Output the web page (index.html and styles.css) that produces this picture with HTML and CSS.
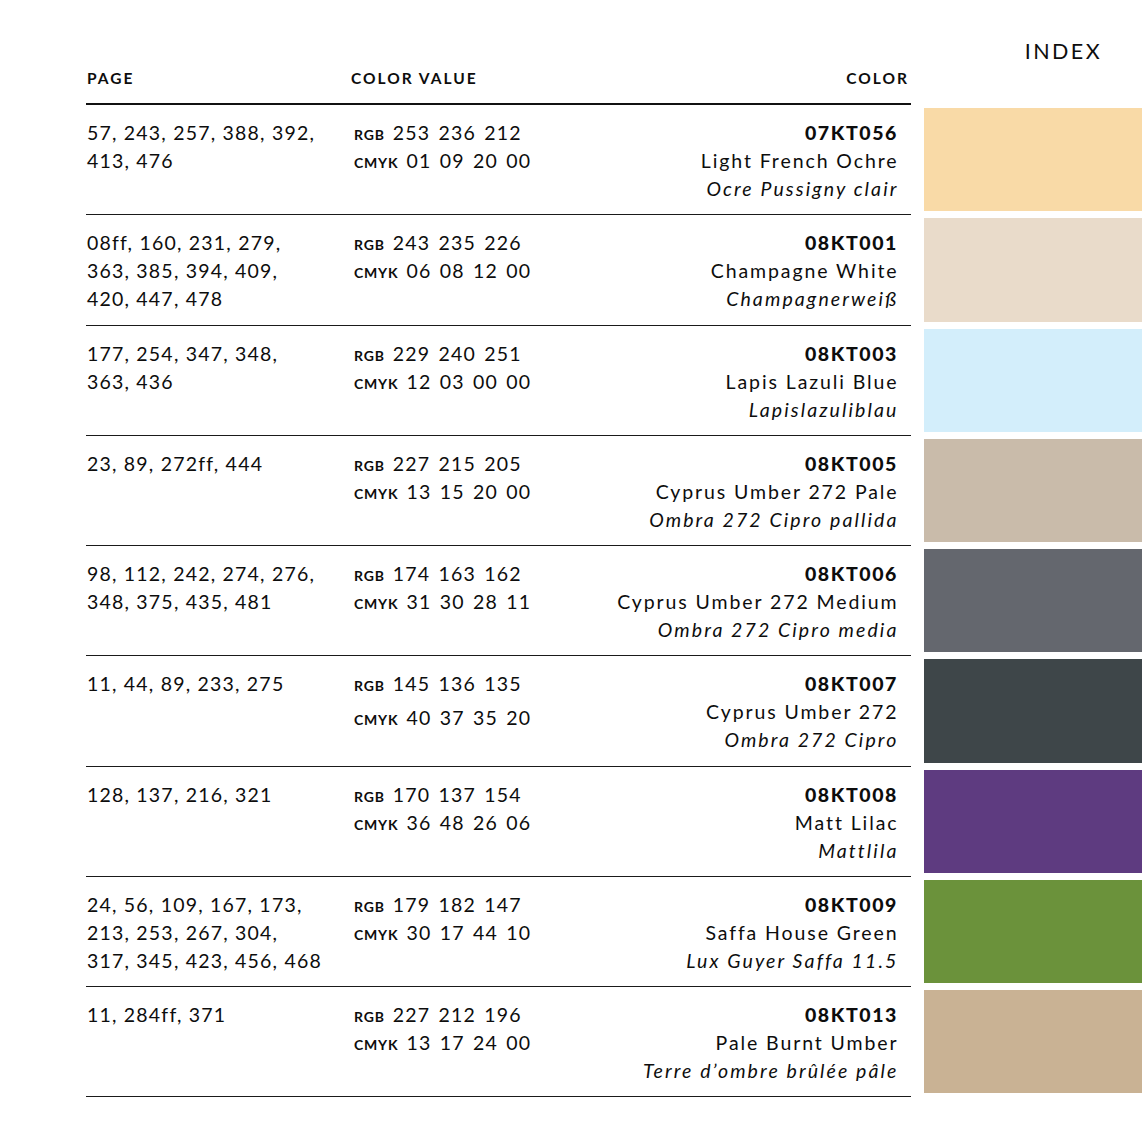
FILE: index.html
```html
<!DOCTYPE html>
<html lang="en">
<head>
<meta charset="utf-8">
<title>Index</title>
<link rel="stylesheet" href="styles.css">
</head>
<body>
<div class="page">
  <div class="row head">
    <div class="cells">
      <div class="c-page label">PAGE</div>
      <div class="c-val label">COLOR VALUE</div>
      <div class="c-color label">COLOR</div>
    </div>
    <div class="index">INDEX</div>
  </div>

  <div class="row">
    <div class="cells">
      <div class="c-page">57, 243, 257, 388, 392,<br>413, 476</div>
      <div class="c-val"><div><span class="sc">RGB</span> 253 236 212</div><div><span class="sc">CMYK</span> 01 09 20 00</div></div>
      <div class="c-color"><b>07KT056</b><span>Light French Ochre</span><i>Ocre Pussigny clair</i></div>
    </div>
    <div class="swatch" style="background:#f9daa7"></div>
  </div>

  <div class="row">
    <div class="cells">
      <div class="c-page">08ff, 160, 231, 279,<br>363, 385, 394, 409,<br>420, 447, 478</div>
      <div class="c-val"><div><span class="sc">RGB</span> 243 235 226</div><div><span class="sc">CMYK</span> 06 08 12 00</div></div>
      <div class="c-color"><b>08KT001</b><span>Champagne White</span><i>Champagnerweiß</i></div>
    </div>
    <div class="swatch" style="background:#e9dbca"></div>
  </div>

  <div class="row">
    <div class="cells">
      <div class="c-page">177, 254, 347, 348,<br>363, 436</div>
      <div class="c-val"><div><span class="sc">RGB</span> 229 240 251</div><div><span class="sc">CMYK</span> 12 03 00 00</div></div>
      <div class="c-color"><b>08KT003</b><span>Lapis Lazuli Blue</span><i>Lapislazuliblau</i></div>
    </div>
    <div class="swatch" style="background:#d3eefb"></div>
  </div>

  <div class="row">
    <div class="cells">
      <div class="c-page">23, 89, 272ff, 444</div>
      <div class="c-val"><div><span class="sc">RGB</span> 227 215 205</div><div><span class="sc">CMYK</span> 13 15 20 00</div></div>
      <div class="c-color"><b>08KT005</b><span>Cyprus Umber 272 Pale</span><i>Ombra 272 Cipro pallida</i></div>
    </div>
    <div class="swatch" style="background:#c9bbaa"></div>
  </div>

  <div class="row">
    <div class="cells">
      <div class="c-page">98, 112, 242, 274, 276,<br>348, 375, 435, 481</div>
      <div class="c-val"><div><span class="sc">RGB</span> 174 163 162</div><div><span class="sc">CMYK</span> 31 30 28 11</div></div>
      <div class="c-color"><b>08KT006</b><span>Cyprus Umber 272 Medium</span><i>Ombra 272 Cipro media</i></div>
    </div>
    <div class="swatch" style="background:#64676e"></div>
  </div>

  <div class="row">
    <div class="cells">
      <div class="c-page">11, 44, 89, 233, 275</div>
      <div class="c-val"><div><span class="sc">RGB</span> 145 136 135</div><div class="shift"><span class="sc">CMYK</span> 40 37 35 20</div></div>
      <div class="c-color"><b>08KT007</b><span>Cyprus Umber 272</span><i>Ombra 272 Cipro</i></div>
    </div>
    <div class="swatch" style="background:#3e4649"></div>
  </div>

  <div class="row">
    <div class="cells">
      <div class="c-page">128, 137, 216, 321</div>
      <div class="c-val"><div><span class="sc">RGB</span> 170 137 154</div><div><span class="sc">CMYK</span> 36 48 26 06</div></div>
      <div class="c-color"><b>08KT008</b><span>Matt Lilac</span><i>Mattlila</i></div>
    </div>
    <div class="swatch" style="background:#5e3b80"></div>
  </div>

  <div class="row">
    <div class="cells">
      <div class="c-page">24, 56, 109, 167, 173,<br>213, 253, 267, 304,<br>317, 345, 423, 456, 468</div>
      <div class="c-val"><div><span class="sc">RGB</span> 179 182 147</div><div><span class="sc">CMYK</span> 30 17 44 10</div></div>
      <div class="c-color"><b>08KT009</b><span>Saffa House Green</span><i>Lux Guyer Saffa 11.5</i></div>
    </div>
    <div class="swatch" style="background:#6b923b"></div>
  </div>

  <div class="row">
    <div class="cells">
      <div class="c-page">11, 284ff, 371</div>
      <div class="c-val"><div><span class="sc">RGB</span> 227 212 196</div><div><span class="sc">CMYK</span> 13 17 24 00</div></div>
      <div class="c-color"><b>08KT013</b><span>Pale Burnt Umber</span><i>Terre d’ombre brûlée pâle</i></div>
    </div>
    <div class="swatch" style="background:#c9b294"></div>
  </div>
</div>
</body>
</html>
```

FILE: styles.css
```css
* { box-sizing: border-box; }
html, body { margin: 0; padding: 0; background: #fff; }
body {
  font-family: Lato, "Noto Sans", sans-serif;
  color: #0d0d0d;
  font-size: 19.5px;
  line-height: 28px;
  letter-spacing: 1.2px;
}
.page {
  width: 1142px;
  padding-left: 86px;
}
.row {
  display: flex;
  height: 110.25px;
}
.row.head { height: 105px; }
.cells {
  width: 825px;
  flex: none;
  display: grid;
  grid-template-columns: 264px 250px 1fr;
  border-bottom: 1px solid #1a1a1a;
  padding-top: 14px;
  padding-left: 1px;
}
.head .cells {
  border-bottom: 2px solid #111;
  padding-top: 0;
  align-items: end;
  padding-bottom: 16px;
}
.label {
  font-size: 15.5px;
  font-weight: 700;
  letter-spacing: 2px;
  line-height: 18px;
}
.head .c-color { padding-right: 2px; }
.c-val { padding-left: 3px; }
.head .c-val { padding-left: 0; }
.c-val div { word-spacing: 2px; }
.c-val .shift { margin-top: 6px; }
.sc {
  font-size: 14px;
  line-height: 10px;
  font-weight: 700;
  letter-spacing: 0.8px;
  word-spacing: 0;
}
.c-color {
  text-align: right;
  padding-right: 14px;
  display: flex;
  flex-direction: column;
  align-items: flex-end;
}
.c-color b { font-weight: 900; letter-spacing: 1.6px; margin-right: -1px; }
.c-color span { letter-spacing: 1.9px; margin-right: -1.5px; }
.c-color i { font-style: italic; letter-spacing: 2.1px; margin-right: -1.5px; }
.index {
  flex: 1;
  margin-left: 13px;
  text-align: right;
  padding-right: 40px;
  padding-top: 37px;
  font-size: 21.5px;
  line-height: 28px;
  letter-spacing: 2.4px;
  font-weight: 400;
}
.swatch {
  flex: 1;
  margin: 3px 0 4px 13px;
}
```
